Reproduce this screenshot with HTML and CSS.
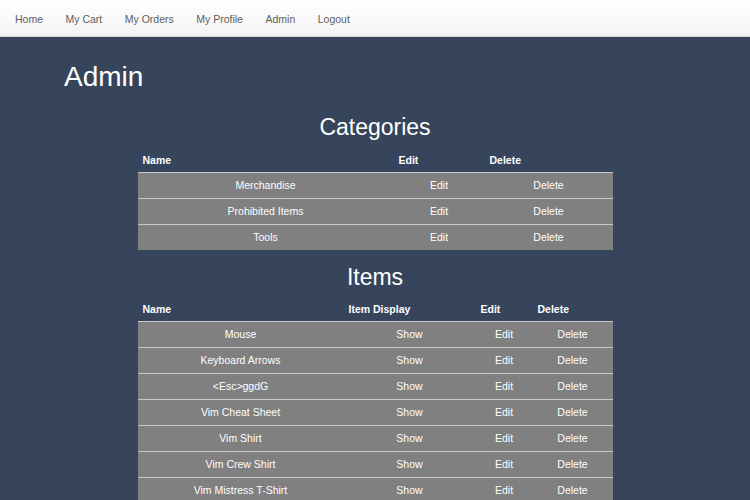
FILE: index.html
```html
<!DOCTYPE html>
<html>
<head>
<meta charset="utf-8">
<link rel="stylesheet" href="styles.css">
</head>
<body>
<nav class="navbar">
  <a href="#">Home</a>
  <a href="#">My Cart</a>
  <a href="#">My Orders</a>
  <a href="#">My Profile</a>
  <a href="#">Admin</a>
  <a href="#">Logout</a>
</nav>
<main class="main">
  <h1 class="title">Admin</h1>
  <section class="block">
    <h2 class="subtitle">Categories</h2>
    <table class="grid">
      <colgroup>
        <col class="c-name-cat"><col class="c-edit-cat"><col class="c-del-cat">
      </colgroup>
      <thead>
        <tr><th>Name</th><th>Edit</th><th>Delete</th></tr>
      </thead>
      <tbody>
        <tr><td>Merchandise</td><td>Edit</td><td>Delete</td></tr>
        <tr><td>Prohibited Items</td><td>Edit</td><td>Delete</td></tr>
        <tr><td>Tools</td><td>Edit</td><td>Delete</td></tr>
      </tbody>
    </table>
  </section>
  <section class="block block-items">
    <h2 class="subtitle">Items</h2>
    <table class="grid">
      <colgroup>
        <col class="c-name-item"><col class="c-show-item"><col class="c-edit-item"><col class="c-del-item">
      </colgroup>
      <thead>
        <tr><th>Name</th><th>Item Display</th><th>Edit</th><th>Delete</th></tr>
      </thead>
      <tbody>
        <tr><td>Mouse</td><td>Show</td><td>Edit</td><td>Delete</td></tr>
        <tr><td>Keyboard Arrows</td><td>Show</td><td>Edit</td><td>Delete</td></tr>
        <tr><td>&lt;Esc&gt;ggdG</td><td>Show</td><td>Edit</td><td>Delete</td></tr>
        <tr><td>Vim Cheat Sheet</td><td>Show</td><td>Edit</td><td>Delete</td></tr>
        <tr><td>Vim Shirt</td><td>Show</td><td>Edit</td><td>Delete</td></tr>
        <tr><td>Vim Crew Shirt</td><td>Show</td><td>Edit</td><td>Delete</td></tr>
        <tr><td>Vim Mistress T-Shirt</td><td>Show</td><td>Edit</td><td>Delete</td></tr>
      </tbody>
    </table>
  </section>
</main>
</body>
</html>
```
FILE: styles.css
```css
html, body {
  margin: 0;
  padding: 0;
}
body {
  background: #36455c;
  font-family: "Liberation Sans", Arial, Helvetica, sans-serif;
  color: #fff;
  height: 500px;
  overflow: hidden;
}
.navbar {
  height: 37px;
  box-sizing: border-box;
  display: flex;
  align-items: center;
  gap: 22.5px;
  padding: 2px 0 0 15px;
  background: linear-gradient(#ffffff, #f4f4f4);
  border-bottom: 1px solid #d6d6d6;
}
.navbar a {
  font-size: 10.5px;
  color: #5e5e5e;
  text-decoration: none;
}
.main {
  padding: 0 0 0 64px;
}
.title {
  margin: 25px 0 0 0;
  font-size: 28px;
  line-height: 30px;
  font-weight: 500;
}
.block {
  width: 475px;
  margin: 23px auto 0 calc((750px - 475px) / 2 - 64px);
}
.block-items {
  margin-top: 15px;
}
.subtitle {
  margin: 0 0 7.5px 0;
  text-align: center;
  font-size: 23px;
  line-height: 25px;
  font-weight: 500;
}
.grid {
  width: 475px;
  border-collapse: collapse;
  table-layout: fixed;
  font-size: 10.5px;
}
.c-name-cat { width: 256px; }
.c-edit-cat { width: 91px; }
.c-del-cat { width: 128px; }
.c-name-item { width: 206px; }
.c-show-item { width: 132px; }
.c-edit-item { width: 57px; }
.c-del-item { width: 80px; }
.grid th {
  text-align: left;
  font-weight: bold;
  padding: 5px 5px 4px 5px;
  line-height: 15px;
  height: 15px;
  border-bottom: 1px solid #c8c8c8;
}
.grid td {
  background: #808080;
  text-align: center;
  height: 25px;
  padding: 0;
  line-height: 15px;
  border-top: 1px solid #c8c8c8;
}
```
